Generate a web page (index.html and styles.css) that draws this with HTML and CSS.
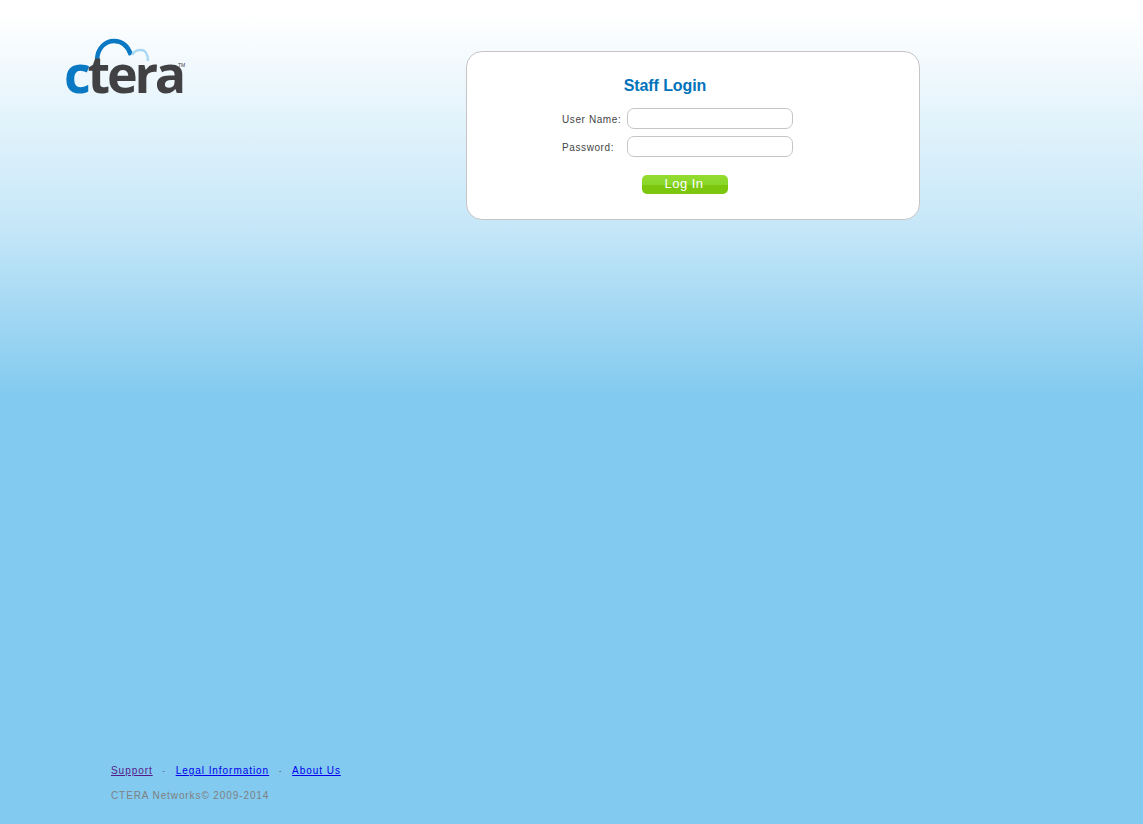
FILE: index.html
```html
<!DOCTYPE html>
<html lang="en">
<head>
    <meta charset="UTF-8">
    <title>Staff Login</title>
    <link rel="stylesheet" href="styles.css">
</head>
<body>
    <div class="top">
        <div class="logo">
            <svg class="logo-cloud" width="84" height="30" viewBox="0 0 84 30">
                <path d="M31 21 C32 9 40 3 48 3 C56 3 62 8 65 17" fill="none" stroke="#0a78c2" stroke-width="4.5"/>
                <path d="M66 17 C68 13 72 12 75 12 C79 12 82 16 82 23" fill="none" stroke="#a9d9f2" stroke-width="2.5"/>
            </svg>
            <div class="logo-text"><span class="logo-c">c</span>tera</div>
            <div class="logo-tm">TM</div>
        </div>

        <div class="login-box">
            <h1>Staff Login</h1>
            <form class="login-form">
                <label for="username">User Name:</label>
                <input type="text" id="username">
                <label for="password">Password:</label>
                <input type="password" id="password">
                <button type="button">Log In</button>
            </form>
        </div>
    </div>

    <div class="footer">
        <div class="footer-links">
            <a class="visited" href="#">Support</a>
            <span>-</span>
            <a href="#">Legal Information</a>
            <span>-</span>
            <a href="#">About Us</a>
        </div>
        <div class="copyright">CTERA Networks© 2009-2014</div>
    </div>
</body>
</html>
```

FILE: styles.css
```css
html, body {
    height: 100%;
}

body {
    margin: 0;
    height: 824px;
    box-sizing: border-box;
    display: flex;
    flex-direction: column;
    justify-content: space-between;
    font-family: 'Liberation Sans', Arial, sans-serif;
    background: #82caef linear-gradient(to bottom, #ffffff 0, #ffffff 15px, #c6e7f8 225px, #82caef 395px) no-repeat;
    overflow: hidden;
}

.top {
    display: flex;
    align-items: flex-start;
    padding: 38px 0 0 66px;
}

.logo {
    width: 122px;
    height: 60px;
    position: relative;
    flex-shrink: 0;
}

.logo-cloud {
    position: absolute;
    left: 0;
    top: 0;
}

.logo-text {
    position: absolute;
    left: -2px;
    top: 3px;
    font-family: 'Open Sans', sans-serif;
    font-weight: 700;
    font-size: 52px;
    line-height: 64px;
    letter-spacing: -3.2px;
    color: #414042;
    white-space: nowrap;
}

.logo-c {
    color: #0a78c2;
}

.logo-tm {
    position: absolute;
    left: 112px;
    top: 24px;
    font-size: 5px;
    line-height: 6px;
    color: #414042;
}

.login-box {
    margin: 13px 0 0 278px;
    width: 452px;
    height: 167px;
    background: #fff;
    border: 1px solid #c8c4c6;
    border-radius: 16px;
}

.login-box h1 {
    margin: 24px 0 0 0;
    padding-right: 56px;
    text-align: center;
    font-size: 16px;
    line-height: 20px;
    font-weight: bold;
    letter-spacing: -0.1px;
    color: #0073bb;
}

.login-form {
    display: grid;
    grid-template-columns: 65px 166px;
    grid-auto-rows: 21px;
    row-gap: 7px;
    margin: 12px 0 0 95px;
    align-items: center;
}

.login-form label {
    padding-top: 2px;
    font-size: 10px;
    letter-spacing: 0.6px;
    color: #444;
}

.login-form input {
    width: 100%;
    height: 21px;
    box-sizing: border-box;
    margin: 0;
    padding: 0 6px;
    background: #fff;
    border: 1px solid #c8c4c6;
    border-radius: 7px;
}

.login-form button {
    grid-column: 1 / 3;
    justify-self: start;
    align-self: start;
    width: 86px;
    height: 19px;
    margin: 11px 0 0 80px;
    padding: 0 2px 2px 0;
    border: none;
    border-radius: 5px;
    background: linear-gradient(to bottom, #94dc30 0, #8ad62a 50%, #7cc70e 50%, #7cc70e 100%);
    font-family: 'Liberation Sans', Arial, sans-serif;
    font-size: 13px;
    letter-spacing: 0.5px;
    color: #fff;
}

.footer {
    padding: 0 0 22px 111px;
    font-size: 10px;
    letter-spacing: 0.95px;
}

.footer-links {
    display: flex;
    gap: 9px;
    line-height: 12px;
    color: #444;
}

.footer-links span {
    width: 5px;
    font-size: 7px;
    text-align: center;
}

.footer-links a {
    color: #0000ee;
}

.footer-links a.visited {
    color: #551a8b;
}

.copyright {
    margin-top: 13px;
    line-height: 12px;
    letter-spacing: 0.9px;
    color: #808080;
}
```
